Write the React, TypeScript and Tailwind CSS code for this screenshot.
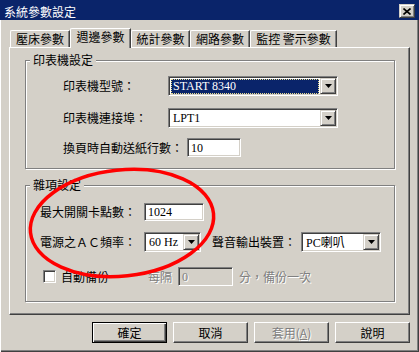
import React from "react";

const sunken =
  "border border-t-[#808080] border-l-[#808080] border-r-white border-b-white shadow-[inset_1px_1px_0_#404040,inset_-1px_-1px_0_#d4d0c8]";
const raised =
  "border border-t-[#d4d0c8] border-l-[#d4d0c8] border-r-[#404040] border-b-[#404040] shadow-[inset_1px_1px_0_#fff,inset_-1px_-1px_0_#808080]";
const serif = "font-['Liberation_Serif',serif] text-[12px]";
const grayText = "text-[#808080] [text-shadow:1px_1px_0_#fff]";

const Arrow = () => (
  <svg width="7" height="4" viewBox="0 0 7 4">
    <path d="M0 0h7L3.5 4z" fill="#000" />
  </svg>
);

const DropBtn = () => (
  <div className={`w-[16px] h-[16px] shrink-0 bg-[#d4d0c8] flex items-center justify-center ${raised}`}>
    <Arrow />
  </div>
);

const Combo = ({ w, children }: { w: string; children: React.ReactNode }) => (
  <div className={`${w} h-[20px] bg-white flex items-center p-[1px] ${sunken}`}>
    <div className="flex-1 h-full flex items-center min-w-0">{children}</div>
    <DropBtn />
  </div>
);

const TextBox = ({ w, h, value, disabled }: { w: string; h: string; value: string; disabled?: boolean }) => (
  <div
    className={`${w} ${h} flex items-center pl-[3px] ${sunken} ${disabled ? "bg-[#d4d0c8]" : "bg-white"}`}
  >
    <span className={`${serif} leading-none ${disabled ? grayText : "text-black"}`}>{value}</span>
  </div>
);

const Tab = ({ label, w, active }: { label: string; w: string; active?: boolean }) => (
  <div
    className={`${w} ${
      active ? "h-[20px] -mb-[1px] relative z-10 pb-[3px]" : "h-[17px]"
    } bg-[#d4d0c8] border-t border-l border-white border-r border-r-[#404040] rounded-tl-[2px] shadow-[inset_-1px_0_0_#808080] flex items-center justify-center text-[12px] leading-none`}
  >
    {label}
  </div>
);

const Button = ({ children, def, disabled }: { children: React.ReactNode; def?: boolean; disabled?: boolean }) => (
  <div
    className={`w-[75px] h-[21px] bg-[#d4d0c8] flex items-center justify-center text-[12px] ${
      def
        ? "border border-black shadow-[inset_1px_1px_0_#fff,inset_-1px_-1px_0_#404040,inset_-2px_-2px_0_#808080]"
        : "border border-t-white border-l-white border-r-[#404040] border-b-[#404040] shadow-[inset_-1px_-1px_0_#808080]"
    } ${disabled ? grayText : "text-black"}`}
  >
    {children}
  </div>
);

const groupBox = "w-[370px] border border-[#808080] shadow-[inset_1px_1px_0_#fff,1px_1px_0_#fff]";
const legend = "ml-[4px] px-[3px] bg-[#d4d0c8] text-[12px] leading-[14px]";

export default function App() {
  return (
    <div className="relative w-[419px] h-[352px] overflow-hidden bg-[#d4d0c8] text-black font-['Noto_Sans_CJK_TC',sans-serif]">
      {/* title bar */}
      <div className="h-[20px] bg-[#0a246a] flex items-center pl-[4px] pr-[4px]">
        <span className="text-white text-[12px] leading-none pt-[3px]">系統參數設定</span>
        <div className={`ml-auto w-[16px] h-[14px] mt-[2px] bg-[#d4d0c8] flex items-center justify-center ${raised}`}>
          <svg width="8" height="7" viewBox="0 0 8 7">
            <path d="M0.5 0.5L7.5 6.5M7.5 0.5L0.5 6.5" stroke="#000" strokeWidth="1.6" />
          </svg>
        </div>
      </div>

      {/* body */}
      <div className="h-[332px] pl-[9px] flex flex-col shadow-[inset_1px_0_0_#fff,inset_-1px_-1px_0_#404040,inset_-2px_-2px_0_#808080]">
        {/* tabs */}
        <div className="mt-[8px] h-[19px] pl-[1px] flex items-end">
          <Tab label="壓床參數" w="w-[60px]" />
          <Tab label="週邊參數" w="w-[61px]" active />
          <Tab label="統計參數" w="w-[59px]" />
          <Tab label="網路參數" w="w-[60px]" />
          <Tab label="監控 警示參數" w="w-[87px]" />
        </div>

        {/* tab panel */}
        <div className="w-[401px] h-[268px] border border-t-white border-l-white border-r-[#404040] border-b-[#404040] shadow-[inset_-1px_-1px_0_#808080] px-[15px] pt-[5px] flex flex-col">
          <fieldset className={`${groupBox} pb-[11px]`}>
            <legend className={legend}>印表機設定</legend>
            <div className="mt-[9px] pl-[37px] flex items-center">
              <span className="w-[105px] text-[12px]">印表機型號：</span>
              <Combo w="w-[170px]">
                <div className="flex-1 h-[15px] mr-[1px] ml-[1px] bg-[#0a246a] outline-1 outline-dotted outline-[#e8dc90] -outline-offset-1 flex items-center pl-[2px]">
                  <span className={`${serif} text-white leading-none`}>START 8340</span>
                </div>
              </Combo>
            </div>
            <div className="mt-[12px] pl-[37px] flex items-center">
              <span className="w-[105px] text-[12px]">印表機連接埠：</span>
              <Combo w="w-[170px]">
                <span className={`${serif} pl-[3px] leading-none`}>LPT1</span>
              </Combo>
            </div>
            <div className="mt-[10px] pl-[37px] flex items-center">
              <span className="w-[124px] text-[12px]">換頁時自動送紙行數：</span>
              <TextBox w="w-[54px]" h="h-[19px]" value="10" />
            </div>
          </fieldset>

          <fieldset className={`${groupBox} mt-[9px] pb-[15px]`}>
            <legend className={legend}>雜項設定</legend>
            <div className="mt-[11px] pl-[14px] flex items-center">
              <span className="w-[104px] text-[12px]">最大開關卡點數：</span>
              <TextBox w="w-[60px]" h="h-[18px]" value="1024" />
            </div>
            <div className="mt-[11px] pl-[14px] flex items-center">
              <span className="w-[104px] text-[12px]">電源之ＡＣ頻率：</span>
              <Combo w="w-[57px]">
                <span className={`${serif} pl-[3px] leading-none`}>60 Hz</span>
              </Combo>
              <span className="ml-[11px] w-[89px] text-[12px]">聲音輸出裝置：</span>
              <Combo w="w-[80px]">
                <span className={`${serif} pl-[3px] leading-none whitespace-nowrap`}>
                  PC<span className="font-['Noto_Sans_CJK_TC',sans-serif]">喇叭</span>
                </span>
              </Combo>
            </div>
            <div className="mt-[15px] pl-[17px] flex items-center">
              <div className={`w-[13px] h-[13px] bg-white ${sunken}`} />
              <span className="ml-[5px] w-[87px] text-[12px]">自動備份</span>
              <span className={`w-[30px] text-[12px] ${grayText}`}>每隔</span>
              <TextBox w="w-[55px]" h="h-[19px]" value="0" disabled />
              <span className={`ml-[6px] text-[12px] ${grayText}`}>分，備份一次</span>
            </div>
          </fieldset>
        </div>

        {/* buttons */}
        <div className="mt-[7px] w-[401px] flex justify-end gap-[6px]">
          <Button def>確定</Button>
          <Button>取消</Button>
          <Button disabled>
            套用(<span className="underline">A</span>)
          </Button>
          <Button>說明</Button>
        </div>
      </div>

      {/* red annotation ellipse */}
      <svg className="absolute left-0 top-0 pointer-events-none" width="419" height="352" viewBox="0 0 419 352">
        <ellipse
          cx="122"
          cy="223"
          rx="92"
          ry="53"
          transform="rotate(-6 122 223)"
          fill="none"
          stroke="#ff0000"
          strokeWidth="3.5"
        />
      </svg>
    </div>
  );
}
